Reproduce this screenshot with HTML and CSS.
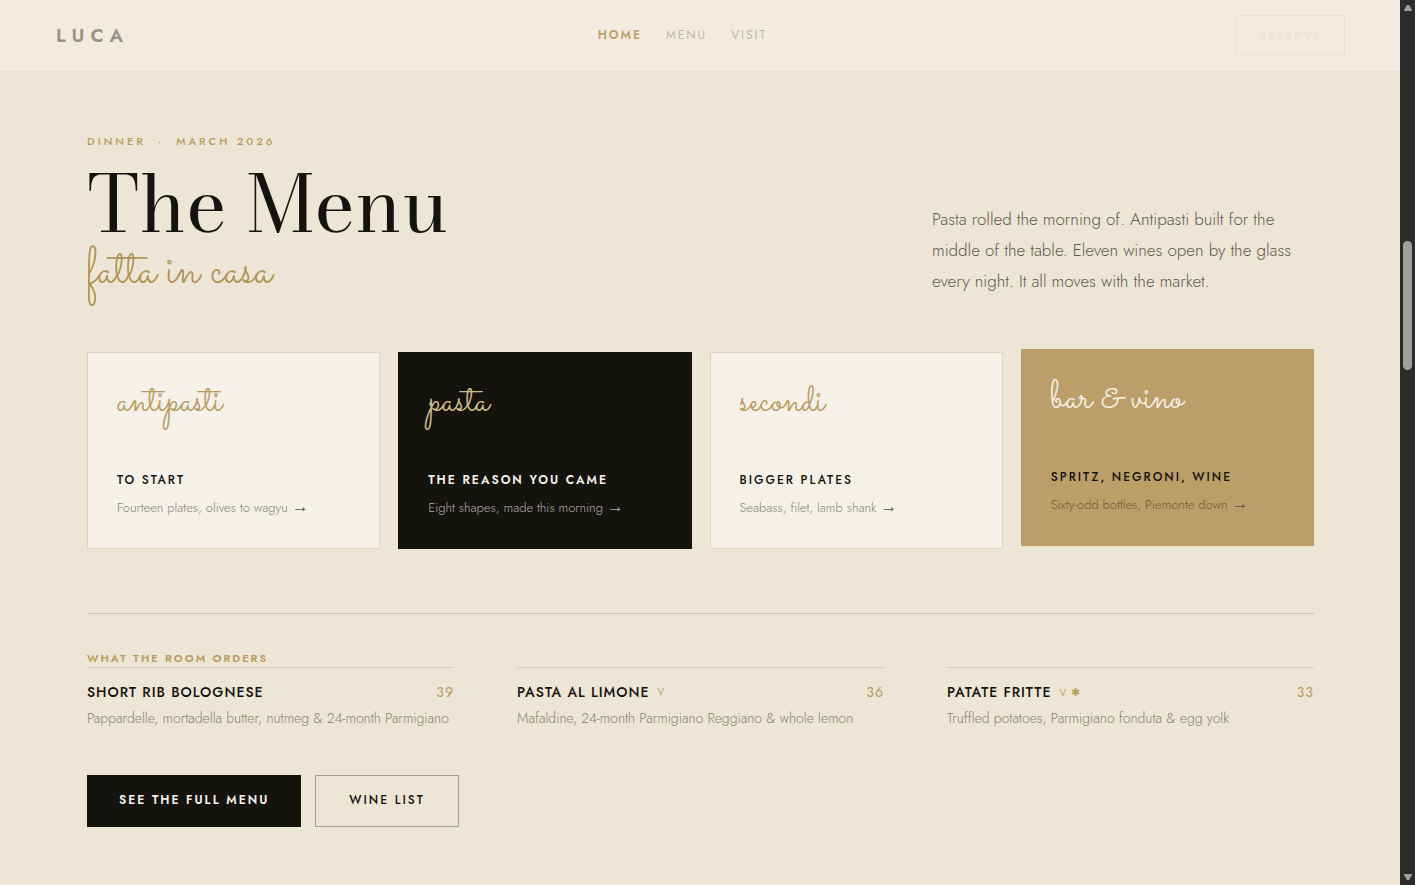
FILE: index.html
```html
<!DOCTYPE html>
<html lang="en">
  <head>
    <meta charset="UTF-8" />
    <meta name="viewport" content="width=device-width, initial-scale=1.0" />
    <title>Luca</title>
    <link rel="stylesheet" href="styles.css">
  </head>
  <body>
    <div class="page">
      <header class="site-header">
        <a class="logo" href="#">LUCA</a>
        <nav class="site-nav">
          <a class="active" href="#">HOME</a>
          <a href="#">MENU</a>
          <a href="#">VISIT</a>
        </nav>
        <button type="button" class="reserve">RESERVE</button>
      </header>

      <main class="menu">
        <section class="intro">
          <div class="intro-title">
            <p class="eyebrow"><span>DINNER</span><span>·</span><span>MARCH 2026</span></p>
            <h1>The Menu</h1>
            <p class="tagline">fatta in casa</p>
          </div>
          <p class="intro-text">
            Pasta rolled the morning of. Antipasti built for the middle of the
            table. Eleven wines open by the glass every night. It all moves
            with the market.
          </p>
        </section>

        <section class="cards">
          <a class="card" href="#">
            <span class="card-name">antipasti</span>
            <span class="card-title">TO START</span>
            <span class="card-text">Fourteen plates, olives to wagyu <span class="arrow">→</span></span>
          </a>
          <a class="card dark" href="#">
            <span class="card-name">pasta</span>
            <span class="card-title">THE REASON YOU CAME</span>
            <span class="card-text">Eight shapes, made this morning <span class="arrow">→</span></span>
          </a>
          <a class="card" href="#">
            <span class="card-name">secondi</span>
            <span class="card-title">BIGGER PLATES</span>
            <span class="card-text">Seabass, filet, lamb shank <span class="arrow">→</span></span>
          </a>
          <a class="card gold" href="#">
            <span class="card-name">bar &amp; vino</span>
            <span class="card-title">SPRITZ, NEGRONI, WINE</span>
            <span class="card-text">Sixty-odd bottles, Piemonte down <span class="arrow">→</span></span>
          </a>
        </section>

        <section class="orders">
          <h2>WHAT THE ROOM ORDERS</h2>
          <div class="dishes">
            <article class="dish">
              <div class="dish-head">
                <h3>SHORT RIB BOLOGNESE</h3>
                <span class="price">39</span>
              </div>
              <p>Pappardelle, mortadella butter, nutmeg &amp; 24-month Parmigiano</p>
            </article>
            <article class="dish">
              <div class="dish-head">
                <h3>PASTA AL LIMONE</h3>
                <span class="tag">V</span>
                <span class="price">36</span>
              </div>
              <p>Mafaldine, 24-month Parmigiano Reggiano &amp; whole lemon</p>
            </article>
            <article class="dish">
              <div class="dish-head">
                <h3>PATATE FRITTE</h3>
                <span class="tag">V <span class="star">✱</span></span>
                <span class="price">33</span>
              </div>
              <p>Truffled potatoes, Parmigiano fonduta &amp; egg yolk</p>
            </article>
          </div>
        </section>

        <div class="actions">
          <button type="button" class="btn btn-dark">SEE THE FULL MENU</button>
          <button type="button" class="btn">WINE LIST</button>
        </div>
      </main>
    </div>

    <div class="scrollbar">
      <svg viewBox="0 0 10 8"><path d="M4 1h2l3 5v1H1V6z" /></svg>
      <div class="track"><div class="thumb"></div></div>
      <svg viewBox="0 0 10 8"><path d="M4 7h2l3-5V1H1v1z" /></svg>
    </div>
  </body>
</html>
```
FILE: styles.css
```css
* {
  box-sizing: border-box;
}

body {
  margin: 0;
  display: flex;
  min-height: 100vh;
  background-color: #ede5d6;
  color: #15130e;
  font-family: Jost, Lato, sans-serif;
}

h1,
h2,
h3,
p {
  margin: 0;
}

a {
  color: inherit;
  text-decoration: none;
}

button {
  font-family: inherit;
  cursor: pointer;
}

.page {
  flex: 1;
  min-width: 0;
}

/* header */
.site-header {
  display: flex;
  justify-content: space-between;
  align-items: center;
  height: 72px;
  padding: 0 55px 1px 56px;
  background-color: #f3ebdf;
  border-bottom: 1px solid #e8e0d1;
}

.logo {
  font-size: 19px;
  font-weight: 600;
  letter-spacing: 6px;
  color: #9a9287;
}

.site-nav {
  display: flex;
  gap: 24px;
  font-size: 12px;
  letter-spacing: 2px;
  color: #c0b6a8;
}

.site-nav .active {
  font-weight: 600;
  color: #bca068;
}

.reserve {
  padding: 0 22px;
  height: 40px;
  border: 1px solid #e9e1d5;
  background: none;
  color: #ebe3d7;
  font-size: 11px;
  font-weight: 700;
  letter-spacing: 2px;
}

/* intro */
.menu {
  padding: 60px 86px 58px 87px;
}

.intro {
  display: flex;
  justify-content: space-between;
  align-items: flex-end;
  margin-bottom: 42px;
}

.eyebrow {
  display: flex;
  gap: 12px;
  font-size: 11px;
  font-weight: 500;
  line-height: 18px;
  letter-spacing: 3px;
  color: #b89c62;
}

h1 {
  margin-top: 10px;
  font-family: "Bodoni Moda", "Liberation Serif", serif;
  font-size: 78px;
  font-weight: 400;
  line-height: 88px;
}

.tagline {
  padding-bottom: 14px;
  font-family: Sacramento, "Liberation Serif", cursive;
  font-size: 50px;
  line-height: 48px;
  color: #b2955b;
}

.intro-text {
  width: 382px;
  padding-bottom: 13px;
  font-size: 17px;
  font-weight: 300;
  line-height: 31px;
  color: #625b4f;
}

/* category cards */
.cards {
  display: grid;
  grid-template-columns: repeat(4, 1fr);
  gap: 18px;
}

.card {
  display: flex;
  flex-direction: column;
  padding: 28px 29px 29px;
  border: 1px solid #ddd5c7;
  background-color: #f5f0e8;
}

.card-name {
  font-family: Sacramento, "Liberation Serif", cursive;
  font-size: 40px;
  line-height: 42px;
  color: #b89b60;
}

.card-title {
  margin-top: 47px;
  font-size: 12px;
  font-weight: 500;
  line-height: 20px;
  letter-spacing: 2px;
}

.card-text {
  margin-top: 7px;
  font-size: 13px;
  font-weight: 300;
  line-height: 22px;
  color: #8a8378;
}

.arrow {
  font-family: "Liberation Sans", sans-serif;
  font-size: 17px;
  line-height: 1;
  color: #5a544a;
}

.card.dark {
  background-color: #15130e;
  border-color: #15130e;
  color: #f5f0e8;
}

.dark .card-name {
  color: #d4bd8c;
}

.dark .card-title {
  font-weight: 600;
}

.dark .card-text,
.dark .arrow {
  color: #b3aea5;
}

.card.gold {
  background-color: #bc9f68;
  border-color: #bc9f68;
  transform: translateY(-3px);
}

.gold .card-name {
  color: #f5f0e8;
}

.gold .card-text {
  color: #6c5b3b;
}

/* popular dishes */
.orders {
  margin-top: 64px;
  padding-top: 35px;
  border-top: 1px solid #cfc7b7;
}

h2 {
  font-size: 11px;
  font-weight: 600;
  line-height: 18px;
  letter-spacing: 2px;
  color: #b89c62;
}

.dishes {
  display: grid;
  grid-template-columns: repeat(3, 1fr);
  gap: 63px;
}

.dish {
  padding-top: 13px;
  border-top: 1px solid #d5cdbd;
}

.dish-head {
  display: flex;
  align-items: center;
  gap: 8px;
  line-height: 22px;
}

h3 {
  font-size: 14px;
  font-weight: 500;
  letter-spacing: 1px;
}

.tag {
  font-size: 10px;
  line-height: 1;
  letter-spacing: 1px;
  color: #b89c62;
}

.star {
  font-size: 11px;
}

.price {
  margin-left: auto;
  font-size: 14px;
  letter-spacing: 1px;
  color: #b89c62;
}

.dish p {
  margin-top: 4px;
  font-size: 14px;
  font-weight: 300;
  line-height: 22px;
  color: #8a8273;
}

/* buttons */
.actions {
  display: flex;
  gap: 14px;
  margin-top: 46px;
}

.btn {
  height: 52px;
  padding: 0 33px 2px;
  border: 1px solid #a79f91;
  background: none;
  color: #15130e;
  font-size: 12px;
  font-weight: 500;
  letter-spacing: 2px;
}

.btn-dark {
  padding: 0 31px 3px;
  background-color: #15130e;
  border-color: #15130e;
  color: #f5f0e8;
  font-weight: 600;
}

/* scrollbar */
.scrollbar {
  position: sticky;
  top: 0;
  display: flex;
  flex-direction: column;
  align-items: center;
  width: 15px;
  height: 100vh;
  padding: 4px 0;
  background-color: #2c2c2c;
}

.scrollbar svg {
  width: 10px;
  height: 8px;
  fill: #a0a0a0;
}

.track {
  flex: 1;
  padding-top: 229px;
}

.thumb {
  width: 9px;
  height: 129px;
  border-radius: 5px;
  background-color: #9f9f9f;
}
```
